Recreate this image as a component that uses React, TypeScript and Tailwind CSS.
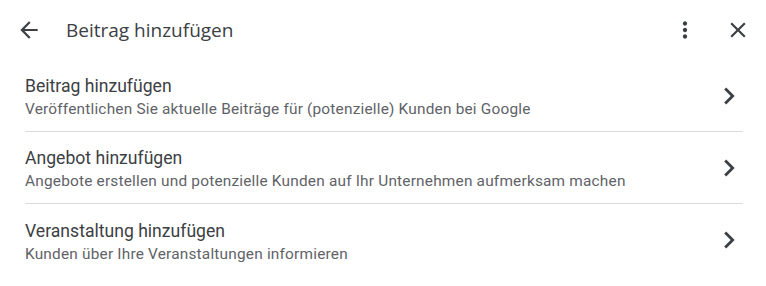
import React from "react";

const rows = [
  {
    title: "Beitrag hinzufügen",
    sub: "Veröffentlichen Sie aktuelle Beiträge für (potenzielle) Kunden bei Google",
  },
  {
    title: "Angebot hinzufügen",
    sub: "Angebote erstellen und potenzielle Kunden auf Ihr Unternehmen aufmerksam machen",
  },
  {
    title: "Veranstaltung hinzufügen",
    sub: "Kunden über Ihre Veranstaltungen informieren",
  },
];

function Chevron() {
  return (
    <svg width="34" height="34" viewBox="0 0 24 24" fill="#3c4043">
      <path d="M10 6L8.59 7.41 13.17 12l-4.58 4.59L10 18l6-6z" />
    </svg>
  );
}

export default function App() {
  return (
    <div className="w-[766px] h-[286px] bg-white text-[#3c4043] font-['Roboto',sans-serif]">
      <div className="h-[60px] flex items-center pl-[16px] pr-[15px]">
        <svg width="26" height="26" viewBox="0 0 24 24" fill="#3c4043">
          <path d="M20 11H7.83l5.59-5.59L12 4l-8 8 8 8 1.41-1.41L7.83 13H20v-2z" />
        </svg>
        <div className="ml-[24px] text-[19px] text-[#3c4043] font-['Open_Sans',sans-serif] flex-1">
          Beitrag hinzufügen
        </div>
        <svg width="26" height="26" viewBox="0 0 24 24" fill="#3c4043" className="mr-[27px]">
          <path d="M12 8c1.1 0 2-.9 2-2s-.9-2-2-2-2 .9-2 2 .9 2 2 2zm0 2c-1.1 0-2 .9-2 2s.9 2 2 2 2-.9 2-2-.9-2-2-2zm0 6c-1.1 0-2 .9-2 2s.9 2 2 2 2-.9 2-2-.9-2-2-2z" />
        </svg>
        <svg width="26" height="26" viewBox="0 0 24 24" fill="#3c4043">
          <path d="M19 6.41L17.59 5 12 10.59 6.41 5 5 6.41 10.59 12 5 17.59 6.41 19 12 13.41 17.59 19 19 17.59 13.41 12z" />
        </svg>
      </div>
      <div className="pl-[25px] pr-[23px]">
        {rows.map((r, i) => (
          <div
            key={i}
            className={`h-[72px] flex items-center ${i < rows.length - 1 ? "border-b border-[#dadce0]" : ""}`}
          >
            <div className="flex-1 pt-[3px]">
              <div className="text-[17.6px] leading-[24px] text-[#3c4043]">{r.title}</div>
              <div className="text-[15.4px] leading-[22px] text-[#5f6368] tracking-[0.2px]">{r.sub}</div>
            </div>
            <div className="mr-[-3px]">
              <Chevron />
            </div>
          </div>
        ))}
      </div>
    </div>
  );
}
